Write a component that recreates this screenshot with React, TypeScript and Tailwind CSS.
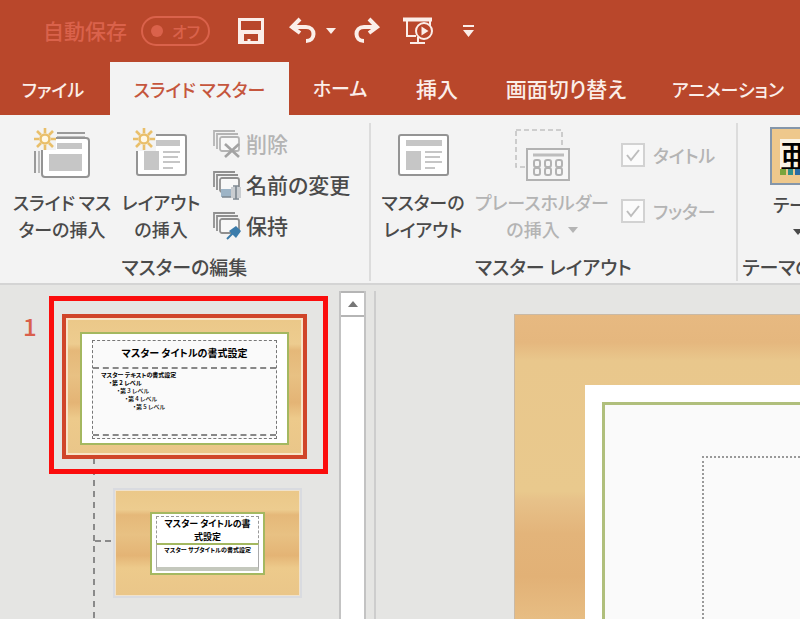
import type { ReactNode } from "react";
import clsx from "clsx";

const tabs = [
  { label: "ファイル", width: "w-[106px]", size: "text-lg", first: true },
  { label: "スライド マスター", width: "w-[179px]", size: "text-lg", active: true },
  { label: "ホーム", width: "w-[102px]", size: "text-[19px]" },
  { label: "挿入", width: "w-[92px]", size: "text-[21px]" },
  { label: "画面切り替え", width: "w-[166px]", size: "text-[21px]" },
  { label: "アニメーション", width: "w-[158px]", size: "text-lg" },
];

const Sun = () => (
  <g stroke="#e9bf6a" strokeWidth="2.6" fill="none">
    <circle cx="12" cy="12" r="4.5" fill="#fff8e6" />
    <path d="M12 1v5M12 18v5M1 12h5M18 12h5M4 4l4 4M16 16l4 4M20 4l-4 4M8 16l-4 4" />
  </g>
);

const SlideMasterIcon = () => (
  <svg width="58" height="56" viewBox="0 0 58 56" fill="none">
    <path d="M24 6h28M2 24v22" stroke="#9a9a9a" strokeWidth="2" />
    <path d="M24 10h28M6 24v22" stroke="#adadad" strokeWidth="1.6" />
    <rect x="9" y="11" width="47" height="39" rx="3" fill="#fff" stroke="#949494" strokeWidth="2" />
    <path d="M24 19h25" stroke="#c6c6c6" strokeWidth="6" />
    <rect x="16" y="27" width="33" height="17" fill="#c6c6c6" />
    <rect x="0" y="0" width="23" height="23" fill="#f3f3f3" />
    <Sun />
  </svg>
);

const LayoutShape = () => (
  <g>
    <rect x="5" y="8" width="49" height="40" rx="2" fill="#fff" stroke="#949494" strokeWidth="2" />
    <path d="M12 16h36" stroke="#c6c6c6" strokeWidth="6" />
    <rect x="12" y="24" width="15" height="19" fill="#c6c6c6" />
    <path d="M31 25h17M31 30h15M31 35h17M31 41h10" stroke="#c6c6c6" strokeWidth="2" />
  </g>
);

const InsertLayoutIcon = () => (
  <svg width="58" height="56" viewBox="0 0 58 56" fill="none">
    <LayoutShape />
    <rect x="0" y="0" width="24" height="24" fill="#f3f3f3" />
    <Sun />
  </svg>
);

const MasterLayoutIcon = () => (
  <svg width="58" height="56" viewBox="0 0 58 56" fill="none">
    <LayoutShape />
  </svg>
);

const PlaceholderIcon = () => (
  <svg width="58" height="56" viewBox="0 0 58 56" fill="none">
    <rect x="3" y="3" width="46" height="37" stroke="#c2c2c2" strokeWidth="1.6" strokeDasharray="5 3" />
    <rect x="14" y="22" width="42" height="31" fill="#f6f6f6" stroke="#b2b2b2" strokeWidth="2" />
    <path d="M20 28h31" stroke="#bdbdbd" strokeWidth="3" />
    <g stroke="#b2b2b2" strokeWidth="2">
      {[20, 31, 42].map((x) => (
        <g key={x}>
          <rect x={x + 1} y="33" width="6" height="7" rx="2" />
          <rect x={x + 1} y="41" width="6" height="7" rx="2" />
        </g>
      ))}
    </g>
  </svg>
);

const StackIcon = ({ faded, children }: { faded?: boolean; children: ReactNode }) => (
  <svg className="shrink-0" width="30" height="30" viewBox="0 0 30 30" fill="none">
    <g stroke={faded ? "#b4b4b4" : "#8f8f8f"} strokeWidth="1.8">
      <path d="M2 17V2h21M5 20V5h21" />
      <rect x="8" y="8" width="19" height="14" rx="2" fill="#f8f8f8" />
    </g>
    {children}
  </svg>
);

const Caret = ({ className }: { className?: string }) => (
  <svg className={className} width="10" height="6" viewBox="0 0 10 6" fill="currentColor">
    <path d="M0 0h10L5 6z" />
  </svg>
);

type BigButtonProps = {
  icon: ReactNode;
  lines: ReactNode[];
  width: string;
  disabled?: boolean;
};

const BigButton = ({ icon, lines, width, disabled }: BigButtonProps) => (
  <button
    disabled={disabled}
    className={clsx("flex shrink-0 flex-col items-center pt-1 text-lg", width, disabled && "text-[#b4b4b4]")}
  >
    {icon}
    <span className="mt-1.5 flex flex-col items-center leading-[27px]">
      {lines.map((line, i) => (
        <span key={i} className="flex min-h-[27px] items-center gap-2">{line}</span>
      ))}
    </span>
  </button>
);

const SmallButton = ({ icon, label, disabled }: { icon: ReactNode; label: string; disabled?: boolean }) => (
  <button disabled={disabled} className={clsx("flex h-[41px] items-center gap-1", disabled && "text-[#b4b4b4]")}>
    {icon}
    {label}
  </button>
);

const CheckItem = ({ id, label }: { id: string; label: string }) => (
  <div className="flex h-14 items-center gap-2 text-lg text-[#b4b4b4]">
    <span className="relative size-6">
      <input
        id={id}
        type="checkbox"
        defaultChecked
        disabled
        className="block size-6 appearance-none border-2 border-[#d2d2d2] bg-[#fbfbfb]"
      />
      <svg className="absolute inset-0" width="24" height="24" viewBox="0 0 24 24" fill="none" stroke="#bdbdbd" strokeWidth="2">
        <path d="M6 12l4 5 8-10" />
      </svg>
    </span>
    <label htmlFor={id}>{label}</label>
  </div>
);

const Group = ({ title, width, children }: { title: string; width: string; children: ReactNode }) => (
  <section className={clsx("flex shrink-0 flex-col border-r-2 border-[#dcdcdc]", width)}>
    <div className="flex h-[130px]">{children}</div>
    <h2 className="text-center text-[19px] leading-7">{title}</h2>
  </section>
);

const ThemeIcon = () => (
  <div className="flex h-[58px] w-14 flex-col border-2 border-[#8496aa] bg-[#eec88c] px-2 pt-2.5 pb-2">
    <div className="flex h-[30px] items-center overflow-hidden bg-[#faf3e4] text-[32px] leading-[30px] text-black">
      亜
    </div>
    <div className="flex h-1.5 gap-0.5 overflow-hidden">
      <i className="w-1.5 bg-[#79a53c]" />
      <i className="w-1.5 bg-[#2f8f89]" />
      <i className="w-1.5 bg-[#2b6ca3]" />
      <i className="w-1.5 bg-[#d65a4a]" />
      <i className="w-1.5 bg-[#e39b36]" />
    </div>
  </div>
);

const wood =
  "bg-[linear-gradient(180deg,#e7b981_0%,#e5b77e_9%,#e9c78c_15%,#e9c98d_58%,#e7c189_61%,#e3b47a_72%,#e2b176_86%,#e7bd83_100%)]";

const woodThumb =
  "bg-[linear-gradient(180deg,#ebc889_0%,#edcc8f_18%,#e5b879_23%,#e8c183_42%,#e4b475_62%,#edca8b_74%,#eac689_100%)]";

const MasterThumb = () => (
  <button className="block w-full border-4 border-[#d0452a] bg-[#f8e3c8] p-0.5">
    <span className={clsx("block px-3 pt-3 pb-2", woodThumb)}>
      <span className="block border-2 border-[#a4b860] bg-white px-2.5 pt-1.5 pb-1">
        <span className="block border border-dashed border-[#777] bg-[#fafafa] text-left text-black">
          <span className="block h-7 border-b-2 border-dashed border-[#888] text-center text-[10px] leading-6 font-bold">
            マスター タイトルの書式設定
          </span>
          <span className="block h-[65px] pt-0.5 pl-2 text-[6px] leading-2">
            <b className="block">マスター テキストの書式設定</b>
            <b className="block pl-2">・第 2 レベル</b>
            <span className="block pl-4">・第 3 レベル</span>
            <span className="block pl-6">・第 4 レベル</span>
            <span className="block pl-8">・第 5 レベル</span>
          </span>
          <span className="block h-1 border-t-2 border-dashed border-[#888]" />
        </span>
      </span>
    </span>
  </button>
);

const LayoutThumb = () => (
  <button className="block w-[189px] border-2 border-[#d9dbe0] bg-[#f0e2cc] p-px">
    <span className={clsx("block px-[34px] pt-[21px] pb-5", woodThumb)}>
      <span className="block border-2 border-[#a4b860] bg-white px-1 py-0.5 text-center text-black">
        <span className="block border-x border-t border-dashed border-[#999] text-[9px] leading-[13px] font-bold">
          <span className="block">マスター タイトルの書</span>
          <span className="block">式設定</span>
        </span>
        <span className="block h-7 border-x border-t-2 border-b-4 border-x-[#aaa] border-t-[#a4b860] border-b-[#c4c8bd] pt-px text-[6px] leading-2 font-bold">
          マスター サブタイトルの書式設定
        </span>
      </span>
    </span>
  </button>
);

export default function App() {
  return (
    <div className="flex h-screen flex-col overflow-hidden bg-[#e5e5e3] font-['Noto_Sans_CJK_JP',sans-serif] text-[21px] font-medium whitespace-nowrap text-[#4a4a4a] [font-feature-settings:'palt']">
      <header className="shrink-0 bg-[#b9472b]">
        <div className="flex h-[62px] items-center pl-[43px] text-[#da624b]">
          <span id="autosave">自動保存</span>
          <button
            role="switch"
            aria-checked="false"
            aria-labelledby="autosave"
            className="ml-3.5 flex h-[30px] w-[69px] items-center justify-between rounded-full border-2 border-current px-2 text-base"
          >
            <i className="size-3 rounded-full bg-current" />
            オフ
          </button>
          <div className="flex items-center text-[#fbeee9]">
            <button aria-label="保存" className="ml-[27px]">
              <svg width="28" height="28" viewBox="0 0 28 28" fill="none" stroke="currentColor" strokeWidth="3">
                <path d="M2.500 2.500h23v23h-23z" />
                <path d="M3 15h22" strokeWidth="4" />
                <path d="M5 16v10M23 16v10" strokeWidth="4" />
                <path d="M12 22v4" />
              </svg>
            </button>
            <button aria-label="元に戻す" className="ml-6">
              <svg width="29" height="28" viewBox="0 0 29 28" fill="none" stroke="currentColor" strokeWidth="4">
                <path d="M3 10h14c10 0 10 14 0 14" />
                <path d="M11 2L3 10l8 6" />
              </svg>
            </button>
            <button aria-label="元に戻す履歴" className="ml-2">
              <Caret />
            </button>
            <button aria-label="やり直し" className="ml-4">
              <svg width="29" height="28" viewBox="0 0 29 28" fill="none" stroke="currentColor" strokeWidth="4">
                <path d="M25 10H12C2 10 2 24 12 24" />
                <path d="M17 2l8 8-8 6" />
              </svg>
            </button>
            <button aria-label="最初から" className="ml-[22px]">
              <svg width="30" height="28" viewBox="0 0 30 28" fill="none" stroke="currentColor" strokeWidth="2">
                <path d="M0 2.500h29" strokeWidth="4" />
                <path d="M4 4v15h9M27 4v6M15 20v6M7 26h15" />
                <circle cx="21" cy="14" r="8" fill="#b9472b" />
                <path d="M18.500 9.500l7 4.500-7 4.500z" fill="currentColor" stroke="none" />
              </svg>
            </button>
            <button aria-label="クイック アクセス ツール バーのユーザー設定" className="ml-[30px]">
              <svg width="11" height="13" viewBox="0 0 11 13" fill="currentColor">
                <path d="M0 0h11v2H0zM0 5h11l-5.500 7z" />
              </svg>
            </button>
          </div>
        </div>
        <nav className="flex h-[53px]">
          {tabs.map((tab) => (
            <button
              key={tab.label}
              className={clsx(
                "shrink-0",
                tab.width,
                tab.size,
                tab.first && "mr-1",
                tab.active ? "bg-[#f3f3f3] text-[#c5563d]" : "text-[#fbeee9]"
              )}
            >
              {tab.label}
            </button>
          ))}
        </nav>
      </header>

      <div className="flex shrink-0 border-b-2 border-[#d4d4d4] bg-[#f3f3f3] pt-2 pb-0.5">
        <Group title="マスターの編集" width="w-[371px]">
          <BigButton icon={<SlideMasterIcon />} lines={["スライド マス", "ターの挿入"]} width="ml-2 w-[108px]" />
          <BigButton icon={<InsertLayoutIcon />} lines={["レイアウト", "の挿入"]} width="w-[90px]" />
          <div className="ml-1.5">
            <SmallButton
              disabled
              label="削除"
              icon={
                <StackIcon faded>
                  <path d="M13 15l14 13M27 15L13 28" stroke="#a3a3a3" strokeWidth="2.6" />
                </StackIcon>
              }
            />
            <SmallButton
              label="名前の変更"
              icon={
                <StackIcon>
                  <rect x="9" y="19" width="12" height="8" fill="#9db4c6" />
                  <path d="M19 17h10v11H19z" fill="#c9cdd1" />
                  <path d="M21 16h6M21 29h6M24 16v13M10 27h9" stroke="#7c8790" strokeWidth="1.6" />
                </StackIcon>
              }
            />
            <SmallButton
              label="保持"
              icon={
                <StackIcon>
                  <path d="M15 28l6-6" stroke="#3b7cab" strokeWidth="2" />
                  <path d="M17 20l7-5 5 5-5 7z" fill="#3b7cab" />
                </StackIcon>
              }
            />
          </div>
        </Group>

        <Group title="マスター レイアウト" width="w-[367px]">
          <BigButton icon={<MasterLayoutIcon />} lines={["マスターの", "レイアウト"]} width="ml-1.5 w-[92px]" />
          <BigButton
            disabled
            icon={<PlaceholderIcon />}
            lines={["プレースホルダー", <>の挿入<Caret /></>]}
            width="w-[146px]"
          />
          <div className="ml-1.5 pt-1">
            <CheckItem id="title" label="タイトル" />
            <CheckItem id="footer" label="フッター" />
          </div>
        </Group>

        <Group title="テーマの編集" width="w-[120px]">
          <BigButton icon={<ThemeIcon />} lines={["テーマ", <Caret />]} width="w-[120px]" />
        </Group>
      </div>

      <div className="flex min-h-0 flex-1">
        <aside className="relative flex w-[339px] shrink-0 items-start pt-[11px]">
          <div className="absolute top-[173px] bottom-0 left-[93px] w-0.5 bg-[repeating-linear-gradient(180deg,#8a8a8a_0px,#8a8a8a_6px,transparent_6px,transparent_11px)]" />
          <div className="absolute top-[255px] left-[95px] w-4 border-t-2 border-dashed border-[#8a8a8a]" />
          <span className="w-[49px] pt-3.5 pl-[23px] text-2xl text-[#d9604c]">1</span>
          <div className="relative">
            <div className="w-[279px] border-5 border-[#fb0d0d] pt-[13px] pr-4 pb-2.5 pl-2">
              <MasterThumb />
            </div>
            <div className="mt-3.5 pl-16">
              <LayoutThumb />
            </div>
          </div>
        </aside>

        <div className="mt-1.5 flex w-[27px] shrink-0 flex-col border-x-2 border-[#c3c3c3] bg-white">
          <button aria-label="上へスクロール" className="flex h-[26px] items-center justify-center border-y-2 border-[#b5b5b5] text-[#777]">
            <Caret className="rotate-180" />
          </button>
        </div>

        <main className="mt-1.5 ml-2 flex min-w-0 flex-1 border-l-2 border-[#cdcdcd] pt-[23px] pl-[138px]">
          <div className={clsx("flex flex-1 border-t border-l border-[#c9b9a5] pt-[70px] pl-[70px]", wood)}>
            <div className="flex flex-1 bg-white pt-[17px] pl-[17px]">
              <div className="flex flex-1 border-t-3 border-l-3 border-[#b0bf7c] bg-[#fafafa] pt-[51px] pl-[97px]">
                <div className="flex-1 border-t-2 border-l-2 border-dotted border-[#999]" />
              </div>
            </div>
          </div>
        </main>
      </div>
    </div>
  );
}
